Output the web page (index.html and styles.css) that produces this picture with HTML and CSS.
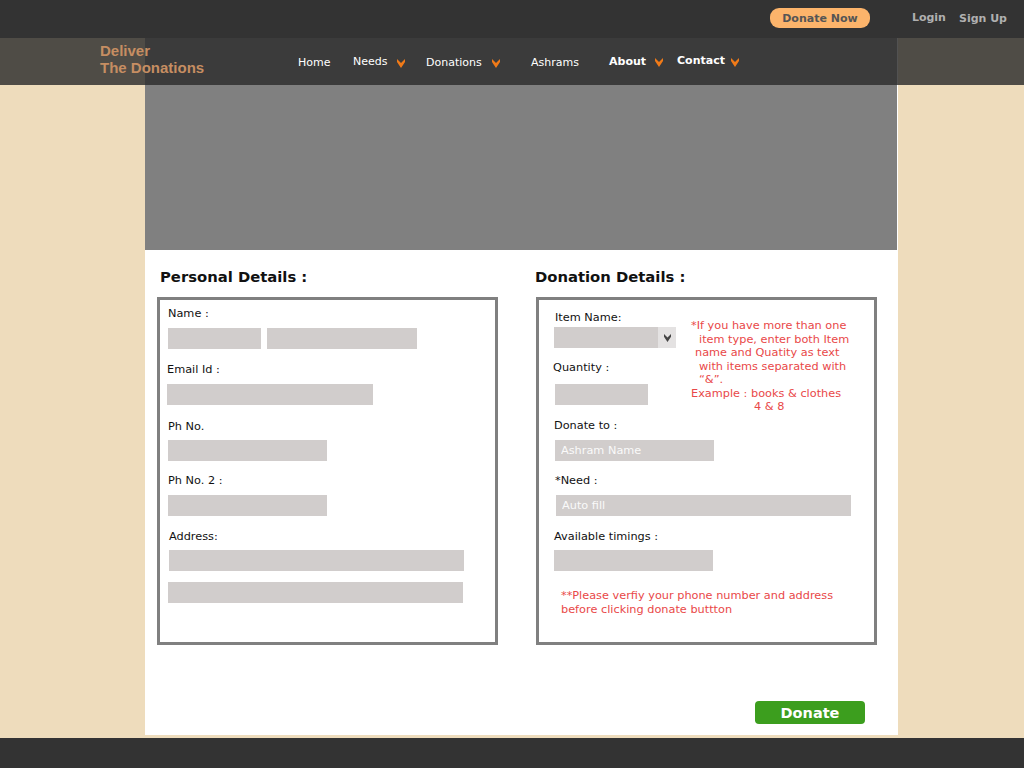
FILE: index.html
```html
<!DOCTYPE html>
<html>
<head>
<meta charset="utf-8">
<title>Deliver The Donations</title>
<link rel="stylesheet" href="styles.css">
</head>
<body>
<div class="topbar">
  <div class="btn-donate-now">Donate Now</div>
  <span class="toplink">Login</span>
  <span class="toplink">Sign Up</span>
</div>
<div class="navbar">
  <div class="logo">Deliver<br>The Donations</div>
  <div class="nav-item w-home">Home</div>
  <div class="nav-item w-needs">Needs<svg class="chev" viewBox="0 0 8 9"><polygon points="0,0 4,4 8,0 8,3 4,9 0,3"/></svg></div>
  <div class="nav-item w-donations">Donations<svg class="chev" viewBox="0 0 8 9"><polygon points="0,0 4,4 8,0 8,3 4,9 0,3"/></svg></div>
  <div class="nav-item w-ashrams">Ashrams</div>
  <div class="nav-item bold w-about">About<svg class="chev" viewBox="0 0 8 9"><polygon points="0,0 4,4 8,0 8,3 4,9 0,3"/></svg></div>
  <div class="nav-item bold w-contact">Contact<svg class="chev" viewBox="0 0 8 9"><polygon points="0,0 4,4 8,0 8,3 4,9 0,3"/></svg></div>
</div>

<div class="page">
  <div class="banner"></div>
  <div class="content">
    <div class="col col-left">
      <h2>Personal Details :</h2>
      <div class="box box-left">
        <div class="lbl">Name :</div>
        <div class="row mt8">
          <input class="inp w93" type="text">
          <input class="inp w150" type="text">
        </div>
        <div class="lbl mt13 shl">Email Id :</div>
        <input class="inp w206 mt8 shl" type="text">
        <div class="lbl mt14">Ph No.</div>
        <input class="inp w159 mt7" type="text">
        <div class="lbl mt12">Ph No. 2 :</div>
        <input class="inp w159 mt8" type="text">
        <div class="lbl mt13 shr">Address:</div>
        <input class="inp w295 mt7 shr" type="text">
        <input class="inp w295 mt11" type="text">
      </div>
    </div>
    <div class="col col-right">
      <h2>Donation Details :</h2>
      <div class="box box-right">
        <div class="top-row">
          <div class="top-left">
            <div class="lbl">Item Name:</div>
            <div class="select mt3 shl">
              <span class="select-field"></span>
              <span class="select-arrow"><svg viewBox="0 0 8 9"><polygon points="0,0 4,4 8,0 8,3 4,9 0,3"/></svg></span>
            </div>
            <div class="lbl mt12 shl2">Quantity :</div>
            <input class="inp w93 mt10" type="text">
          </div>
          <div class="note">
            <div>*If you have more than one</div>
            <div class="i8">item type, enter both Item</div>
            <div class="i4">name and Quatity as text</div>
            <div class="i8">with items separated with</div>
            <div class="i8">“&amp;”.</div>
            <div>Example : books &amp; clothes</div>
            <div class="i63">4 &amp; 8</div>
          </div>
        </div>
        <div class="lbl mt13 shl">Donate to :</div>
        <input class="inp w159 mt8" type="text" placeholder="Ashram Name">
        <div class="lbl mt12">*Need :</div>
        <input class="inp w295 mt8 shr" type="text" placeholder="Auto fill">
        <div class="lbl mt13 shl">Available timings :</div>
        <input class="inp w159 mt7 shl" type="text">
        <div class="note2">**Please verfiy your phone number and address<br>before clicking donate buttton</div>
      </div>
      <div class="btn-donate">Donate</div>
    </div>
  </div>
</div>
<div class="spacer"></div>
<div class="footer"></div>
</body>
</html>
```
FILE: styles.css
```css
* { box-sizing: border-box; }

body {
  margin: 0;
  background: #eedcbc;
  font-family: "DejaVu Sans", Verdana, sans-serif;
  font-size: 11px;
  color: #111;
}

.topbar {
  height: 38px;
  background: #333333;
  display: flex;
  align-items: center;
  justify-content: flex-end;
  padding-right: 17px;
}

.btn-donate-now {
  width: 100px;
  height: 20px;
  border-radius: 9px;
  background: #fcb46b;
  color: #555;
  font-weight: bold;
  display: flex;
  align-items: center;
  justify-content: center;
  margin-right: 42px;
  margin-top: -2px;
}

.toplink {
  color: #b0b0b0;
  font-weight: bold;
  margin-top: -3px;
}
.toplink + .toplink { margin-left: 13px; margin-top: -1px; }

.navbar {
  position: absolute;
  top: 38px;
  left: 0;
  right: 0;
  height: 47px;
  background: rgba(44, 44, 44, 0.82);
  display: flex;
  align-items: center;
  padding-left: 100px;
}

.logo {
  width: 198px;
  align-self: flex-start;
  padding-top: 4px;
  font-family: "Liberation Sans", Arial, sans-serif;
  font-weight: bold;
  font-size: 15px;
  line-height: 17px;
  color: #c68e62;
}

.nav-item {
  display: flex;
  align-items: center;
  color: #fff;
  white-space: nowrap;
}
.nav-item.bold { font-weight: bold; }

.chev {
  width: 8px;
  height: 9px;
  fill: #f07a18;
  margin-top: 2px;
}

.w-home { width: 55px; margin-top: 1px; }
.w-needs { width: 73px; margin-top: -1px; }
.w-needs .chev { margin-left: 10px; margin-top: 4px; }
.w-donations { width: 105px; margin-top: 1px; }
.w-donations .chev { margin-left: 10px; }
.w-ashrams { width: 78px; margin-top: 1px; }
.w-about { width: 68px; }
.w-about .chev { margin-left: 9px; }
.w-contact { margin-top: -2px; }
.w-contact .chev { margin-left: 6px; margin-top: 4px; }

.page {
  width: 753px;
  margin-left: 145px;
  background: #fff;
}

.banner {
  width: 752px;
  height: 212px;
  background: #808080;
}

.content {
  height: 485px;
  display: flex;
  padding-top: 17px;
  font-size: 11.3px;
}

.col-left { margin-left: 12px; width: 341px; }
.col-right { margin-left: 38px; width: 341px; }

h2 {
  margin: 0 0 10px;
  font-size: 14.8px;
  line-height: 20px;
  font-weight: bold;
  color: #111;
  white-space: nowrap;
}
.col-left h2 { padding-left: 3px; }
.col-right h2 { margin-left: -1px; }

.box {
  border: 3px solid #808080;
  height: 348px;
}
.box-left { padding: 6px 0 0 8px; }
.box-right { padding: 10px 0 0 16px; margin-top: 1px; }

.lbl {
  line-height: 14px;
  padding-top: 1px;
  margin-bottom: -1px;
  white-space: nowrap;
}

.inp {
  display: block;
  height: 21px;
  border: 0;
  padding: 0 0 0 6px;
  margin: 0;
  background: #d1cdcc;
  font: inherit;
  color: #fff;
  outline: none;
}
.inp::placeholder { color: #fafafa; opacity: 1; }

.row { display: flex; gap: 6px; }

.w93 { width: 93px; }
.w150 { width: 150px; }
.w159 { width: 159px; }
.w206 { width: 206px; }
.w295 { width: 295px; }

.mt3 { margin-top: 3px; }
.mt7 { margin-top: 7px; }
.mt8 { margin-top: 8px; }
.mt10 { margin-top: 10px; }
.mt11 { margin-top: 11px; }
.mt12 { margin-top: 12px; }
.mt13 { margin-top: 13px; }
.mt14 { margin-top: 14px; }

.shl { margin-left: -1px; }
.shl2 { margin-left: -2px; }
.shr { margin-left: 1px; }

.top-row {
  display: flex;
  height: 95px;
  align-items: flex-start;
}
.top-left { width: 136px; flex: none; }

.select {
  display: flex;
  width: 122px;
  height: 21px;
}
.select-field { width: 104px; background: #d1cdcc; }
.select-arrow {
  width: 18px;
  background: #e4e2e2;
  display: flex;
  align-items: center;
  justify-content: center;
}
.select-arrow svg { width: 7px; height: 8px; fill: #444; }

.note {
  margin-top: 9px;
  color: #e94848;
  line-height: 13.5px;
  white-space: nowrap;
}
.i4 { padding-left: 4px; }
.i8 { padding-left: 8px; }
.i63 { padding-left: 63px; }

.note2 {
  margin: 18px 0 0 6px;
  color: #e94848;
  line-height: 14px;
  white-space: nowrap;
}

.btn-donate {
  width: 110px;
  height: 23px;
  margin: 56px 0 0 219px;
  background: #3c9e1e;
  border-radius: 4px;
  color: #fff;
  font-weight: bold;
  font-size: 14.5px;
  display: flex;
  align-items: center;
  justify-content: center;
}

.spacer { height: 3px; }

.footer {
  height: 30px;
  background: #333333;
}
```
